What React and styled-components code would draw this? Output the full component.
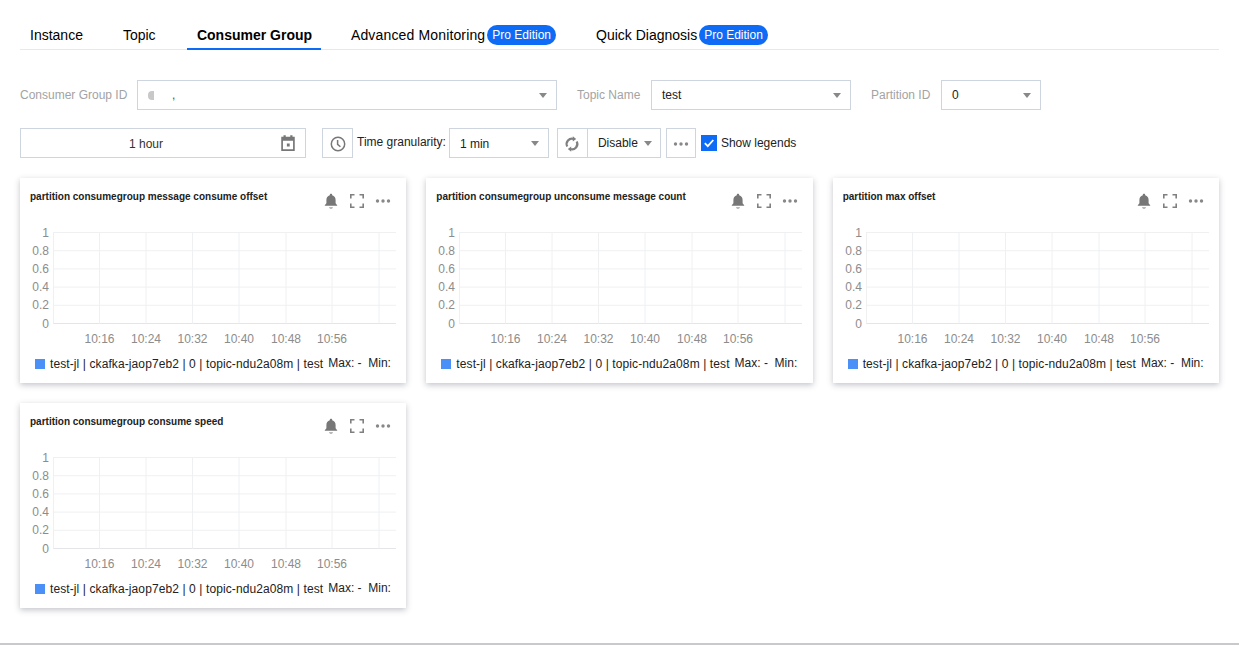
import React from 'react';
import styled, { createGlobalStyle } from 'styled-components';

const GlobalStyle = createGlobalStyle`
    html, body {
        margin: 0;
        padding: 0;
        background: #fff;
    }
    body {
        font-family: "Liberation Sans", Arial, sans-serif;
        font-size: 12px;
        color: #000;
    }
`;

const Page = styled.div`
    box-sizing: border-box;
    height: 645px;
    padding: 20px 20px 0;
    border-bottom: 2px solid #c9c9cd;
    overflow: hidden;
`;

const Tabs = styled.div`
    display: flex;
    gap: 20px;
    box-sizing: border-box;
    height: 30px;
    border-bottom: 1px solid #e5e8ec;
`;

const Tab = styled.div`
    display: flex;
    align-items: center;
    gap: 2px;
    box-sizing: border-box;
    width: ${props => (props.width ? `${props.width}px` : 'auto')};
    height: 30px;
    padding: 2px 10px 0;
    font-size: 14px;
    font-weight: ${props => (props.active ? 'bold' : 'normal')};
    border-bottom: 2px solid ${props => (props.active ? '#0d6bf5' : 'transparent')};
    white-space: nowrap;
`;

const TabLabel = styled.span`
    letter-spacing: ${props => props.spacing || 0}px;
`;

const ProBadge = styled.span`
    display: inline-flex;
    align-items: center;
    height: 20px;
    padding: 0 5px;
    border-radius: 10px;
    background: #0d6bf5;
    color: #fff;
    font-size: 12px;
    font-weight: normal;
`;

const FilterRow = styled.div`
    display: flex;
    align-items: center;
    height: 30px;
    margin-top: ${props => props.top}px;
`;

const FieldLabel = styled.label`
    width: ${props => props.width}px;
    flex: none;
    color: #a3a3a3;
    margin-left: ${props => props.left || 0}px;
    white-space: nowrap;
`;

const Select = styled.div`
    box-sizing: border-box;
    flex: none;
    display: flex;
    align-items: center;
    justify-content: space-between;
    width: ${props => props.width}px;
    height: 30px;
    padding: ${props => (props.low ? 1 : 0)}px 9px 0 10px;
    border: 1px solid #cfd5de;
    background: #fff;
    color: #222;
`;

const Caret = styled.span`
    width: 0;
    height: 0;
    border-left: 4px solid transparent;
    border-right: 4px solid transparent;
    border-top: 5px solid #888;
    margin-left: ${props => props.left || 0}px;
`;

const MaskedValue = styled.span`
    display: flex;
    align-items: center;
    gap: 18px;
    color: #555;
    &::before {
        content: '';
        width: 6px;
        height: 9px;
        border-radius: 4px 0 0 4px;
        background: #c8c8c8;
    }
`;

const DateInput = styled.div`
    box-sizing: border-box;
    position: relative;
    flex: none;
    display: flex;
    align-items: center;
    justify-content: center;
    width: 286px;
    height: 30px;
    padding: 1px 34px 0 0;
    border: 1px solid #cfd5de;
    color: #333;
    svg {
        position: absolute;
        right: 8px;
        top: 5px;
    }
`;

const IconButton = styled.div`
    box-sizing: border-box;
    flex: none;
    display: flex;
    align-items: center;
    justify-content: center;
    width: ${props => props.width || 31}px;
    height: 30px;
    padding-top: 1px;
    margin-left: ${props => props.left || 0}px;
    border: 1px solid #cfd5de;
    background: #fff;
`;

const GranularityLabel = styled.span`
    margin: 0 3px 0 4px;
    color: #222;
    white-space: nowrap;
    position: relative;
    top: -1px;
`;

const SwitchSelect = styled.div`
    box-sizing: border-box;
    flex: none;
    display: flex;
    align-items: center;
    width: 74px;
    height: 30px;
    margin-left: -1px;
    padding-left: 10px;
    border: 1px solid #cfd5de;
    color: #222;
`;

const LegendToggle = styled.div`
    display: flex;
    align-items: center;
    gap: 4px;
    margin-left: 5px;
    color: #222;
    white-space: nowrap;
`;

const CheckBox = styled.span`
    display: flex;
    align-items: center;
    justify-content: center;
    width: 16px;
    height: 16px;
    background: #0d6bf5;
`;

const CardGrid = styled.div`
    display: grid;
    grid-template-columns: repeat(3, 1fr);
    gap: 20px;
    margin-top: 20px;
`;

const Card = styled.div`
    height: 205px;
    background: #fff;
    box-shadow: 0 2px 6px rgba(54, 58, 80, 0.3);
`;

const CardHeader = styled.div`
    display: flex;
    justify-content: space-between;
    height: 40px;
    padding: 12px 15px 0 10px;
    box-sizing: border-box;
`;

const CardTitle = styled.div`
    padding-top: 1px;
    font-size: 10px;
    line-height: 12px;
    font-weight: bold;
    color: #222;
    white-space: nowrap;
`;

const CardTools = styled.div`
    display: flex;
    align-items: flex-start;
    gap: 11px;
    padding-top: 3px;
`;

const ChartSvg = styled.svg`
    display: block;
    width: 100%;
    height: 130px;
`;

const AxisText = styled.text`
    font-family: "Liberation Sans", Arial, sans-serif;
    font-size: 12px;
    fill: #8c8c8c;
`;

const LegendRow = styled.div`
    display: flex;
    align-items: center;
    padding: 9px 0 0 15px;
    letter-spacing: 0.1px;
    white-space: nowrap;
    color: #222;
`;

const Swatch = styled.span`
    width: 10px;
    height: 10px;
    margin-right: 5px;
    background: #4a90f7;
`;

const LegendStats = styled.span`
    margin-left: 5px;
    letter-spacing: 0;
    position: relative;
    top: -1px;
`;

const ToolIcon = styled.svg`
    display: block;
    fill: ${props => props.color || '#777'};
`;

const BellIcon = () => (
    <ToolIcon width="16" height="16" viewBox="0 0 16 16">
        <path d="M8 .8c.7 0 1.2.5 1.2 1.1v.4c2.2.6 3.4 2.4 3.4 4.7v3.2l1.6 2v.6H1.8V12.200l1.6-2V7c0-2.300 1.200-4.100 3.400-4.700v-.4C6.800 1.300 7.300.8 8 .8zM6 14.400h4c-.3.7-1.100 1.200-2 1.200s-1.700-.5-2-1.200z" />
    </ToolIcon>
);

const FullscreenIcon = () => (
    <ToolIcon width="14" height="14" viewBox="0 0 14 14" style={{ marginTop: 1 }} color="#808080">
        <path d="M0 0h4.500v1.600H1.600v2.900H0zM9.500 0H14v4.500h-1.600V1.600H9.500zM0 9.500h1.600v2.900h2.900V14H0zM12.400 9.500H14V14H9.500v-1.600h2.900z" />
    </ToolIcon>
);

const DotsIcon = () => (
    <ToolIcon width="16" height="16" viewBox="0 0 16 16" color="#888">
        <circle cx="2.500" cy="8" r="1.700" />
        <circle cx="8" cy="8" r="1.700" />
        <circle cx="13.500" cy="8" r="1.700" />
    </ToolIcon>
);

const CalendarIcon = () => (
    <ToolIcon width="18" height="18" viewBox="0 0 16 16">
        <path d="M4 1h2v1.500h4V1h2v1.500h2V15H2V2.500h2zM3.500 6v7.500h9V6zM7 8.500h2.500V11H7z" fillRule="evenodd" />
    </ToolIcon>
);

const ClockIcon = () => (
    <svg width="16" height="16" viewBox="0 0 16 16" fill="none" stroke="#777" strokeWidth="1.500">
        <circle cx="8" cy="8" r="6.700" />
        <path d="M7.600 4v4.300l2.800 2.400" />
    </svg>
);

const RefreshIcon = () => (
    <svg width="16" height="16" viewBox="0 0 16 16" fill="none" stroke="#808080" strokeWidth="2.200">
        <path d="M3.300 10.500A5.300 5.300 0 0 1 9.800 3" />
        <path d="M12.700 5.500A5.300 5.300 0 0 1 6.200 13" />
        <path d="M8.800 .2l3.400 2.700-3.400 2.700zM7.200 10.400l-3.400 2.700 3.400 2.700z" fill="#808080" stroke="none" />
    </svg>
);

const CheckIcon = () => (
    <svg width="12" height="12" viewBox="0 0 12 12" fill="none" stroke="#fff" strokeWidth="1.800">
        <path d="M1.800 6.200l3 3 5.500-6.200" />
    </svg>
);

const GRID_X = [79.5, 126, 172.5, 219, 266, 312, 359];
const TIME_LABELS = ['10:16', '10:24', '10:32', '10:40', '10:48', '10:56'];
const Y_LABELS = ['1', '0.8', '0.6', '0.4', '0.2', '0'];

const Chart = () => (
    <ChartSvg viewBox="0 0 386 130" preserveAspectRatio="xMinYMin meet">
        {Y_LABELS.map((label, idx) => {
            const y = 14.5 + idx * 18.2;
            return (
                <g key={label}>
                    <line x1="33" x2="376" y1={y} y2={y} stroke={label === '0' ? '#e3e5e8' : '#eff0f2'} />
                    <AxisText x="29" y={y + 4} textAnchor="end">
                        {label}
                    </AxisText>
                </g>
            );
        })}
        <line x1="33.500" x2="33.500" y1="14" y2="105.500" stroke="#eff0f2" />
        {GRID_X.map(x => (
            <line key={x} x1={x} x2={x} y1="14" y2="105.500" stroke="#eff0f2" />
        ))}
        {TIME_LABELS.map((label, idx) => (
            <AxisText key={label} x={GRID_X[idx]} y="124.500" textAnchor="middle">
                {label}
            </AxisText>
        ))}
    </ChartSvg>
);

const MetricCard = ({ title }) => (
    <Card>
        <CardHeader>
            <CardTitle>{title}</CardTitle>
            <CardTools>
                <BellIcon />
                <FullscreenIcon />
                <DotsIcon />
            </CardTools>
        </CardHeader>
        <Chart />
        <LegendRow>
            <Swatch />
            test-jl | ckafka-jaop7eb2 | 0 | topic-ndu2a08m | test
            <LegendStats>Max: - &nbsp;Min:</LegendStats>
        </LegendRow>
    </Card>
);

const METRICS = [
    'partition consumegroup message consume offset',
    'partition consumegroup unconsume message count',
    'partition max offset',
    'partition consumegroup consume speed',
];

const App = () => (
    <Page>
        <GlobalStyle />
        <Tabs>
            <Tab>Instance</Tab>
            <Tab width={54}>Topic</Tab>
            <Tab active width={134}>
                Consumer Group
            </Tab>
            <Tab>
                <TabLabel spacing={0.15}>Advanced Monitoring</TabLabel>
                <ProBadge>Pro Edition</ProBadge>
            </Tab>
            <Tab>
                <TabLabel>Quick Diagnosis</TabLabel>
                <ProBadge>Pro Edition</ProBadge>
            </Tab>
        </Tabs>
        <FilterRow top={30}>
            <FieldLabel width={117}>Consumer Group ID</FieldLabel>
            <Select width={420}>
                <MaskedValue>,</MaskedValue>
                <Caret />
            </Select>
            <FieldLabel left={20} width={74}>
                Topic Name
            </FieldLabel>
            <Select width={200}>
                test
                <Caret />
            </Select>
            <FieldLabel left={20} width={70}>
                Partition ID
            </FieldLabel>
            <Select width={100}>
                0
                <Caret />
            </Select>
        </FilterRow>
        <FilterRow top={18}>
            <DateInput>
                1 hour
                <CalendarIcon />
            </DateInput>
            <IconButton left={16}>
                <ClockIcon />
            </IconButton>
            <GranularityLabel>Time granularity:</GranularityLabel>
            <Select width={100} low>
                1 min
                <Caret />
            </Select>
            <IconButton left={8}>
                <RefreshIcon />
            </IconButton>
            <SwitchSelect>
                Disable
                <Caret left={6} />
            </SwitchSelect>
            <IconButton left={5} width={30}>
                <DotsIcon />
            </IconButton>
            <LegendToggle>
                <CheckBox>
                    <CheckIcon />
                </CheckBox>
                Show legends
            </LegendToggle>
        </FilterRow>
        <CardGrid>
            {METRICS.map(title => (
                <MetricCard key={title} title={title} />
            ))}
        </CardGrid>
    </Page>
);

export default App;
